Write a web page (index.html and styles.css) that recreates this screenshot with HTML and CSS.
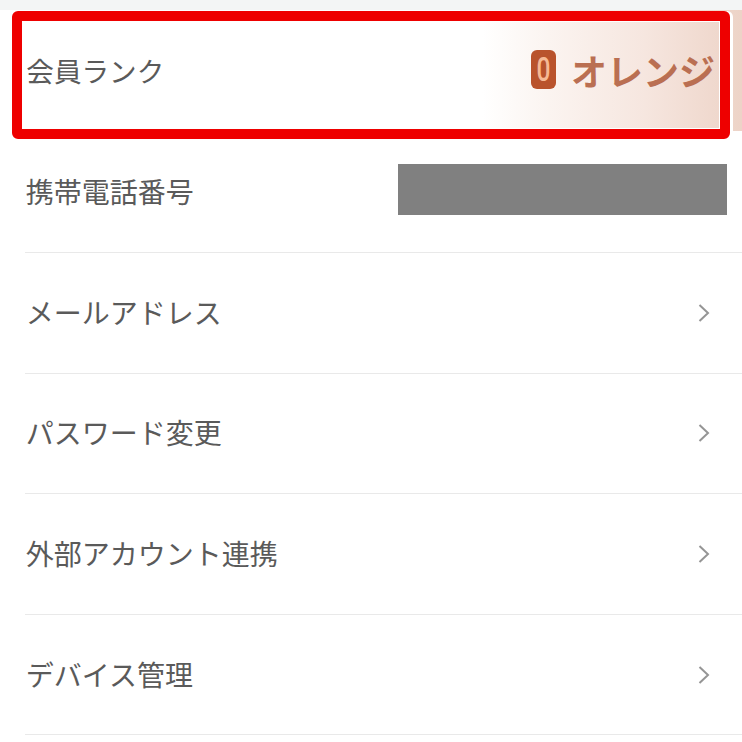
FILE: index.html
```html
<!DOCTYPE html>
<html lang="ja">
<head>
<meta charset="utf-8">
<title>会員情報</title>
<link rel="stylesheet" href="styles.css">
</head>
<body>
<div class="top-strip"></div>
<ul class="list">
  <li class="row rank">
    <span class="label">会員ランク</span>
    <span class="rank-value"><span class="badge"><span class="digit">0</span></span><span class="rank-name">オレンジ</span></span>
  </li>
  <li class="row"><span class="label">携帯電話番号</span><span class="redacted"></span></li>
  <li class="row"><span class="label">メールアドレス</span><svg class="chev" viewBox="0 0 12 20"><path d="M1.5 2 L10 10 L1.5 18"/></svg></li>
  <li class="row"><span class="label">パスワード変更</span><svg class="chev" viewBox="0 0 12 20"><path d="M1.5 2 L10 10 L1.5 18"/></svg></li>
  <li class="row"><span class="label">外部アカウント連携</span><svg class="chev" viewBox="0 0 12 20"><path d="M1.5 2 L10 10 L1.5 18"/></svg></li>
  <li class="row"><span class="label">デバイス管理</span><svg class="chev" viewBox="0 0 12 20"><path d="M1.5 2 L10 10 L1.5 18"/></svg></li>
</ul>
<div class="highlight"></div>
</body>
</html>
```
FILE: styles.css
```css
html, body {
  margin: 0;
  padding: 0;
  background: #fff;
  height: 742px;
  overflow: hidden;
}
body {
  position: relative;
  font-family: "Noto Sans CJK JP", "Noto Sans", sans-serif;
  color: #5a5a5a;
}
.top-strip {
  height: 10px;
  background: #f3f5f5;
}
.list {
  list-style: none;
  margin: 0;
  padding: 0;
}
.row {
  box-sizing: border-box;
  height: 120.6px;
  margin-left: 25px;
  display: flex;
  align-items: center;
  justify-content: space-between;
  border-bottom: 1px solid #e9e9e9;
  padding-right: 32px;
  padding-bottom: 2px;
}
.label {
  font-size: 28px;
  line-height: 40px;
  margin-left: 0.8px;
}
.rank {
  height: 121px;
  margin-left: 0;
  margin-bottom: 1.4px;
  padding-left: 25.5px;
  padding-right: 27px;
  border-bottom: none;
  background: linear-gradient(90deg, #fff 65%, #fbf4f0 74%, #f6e6df 87%, #edd3c7 100%);
}
.rank .label {
  font-size: 27.6px;
}
.rank-value {
  display: flex;
  align-items: center;
  gap: 15px;
}
.badge {
  width: 25px;
  height: 39px;
  border-radius: 6px;
  background: #b9532c;
  color: #f6b994;
  font-family: "Roboto", sans-serif;
  font-weight: 500;
  font-size: 30px;
  line-height: 39px;
  text-align: center;
}
.digit {
  display: inline-block;
  transform: scale(0.82, 1.1);
}
.rank-name {
  font-size: 36px;
  line-height: 44px;
  font-weight: 700;
  color: #ba6f52;
}
.redacted {
  width: 329px;
  height: 51px;
  margin-right: -17px;
  margin-bottom: 3px;
  background: #808080;
}
.chev {
  width: 12px;
  height: 20px;
  margin-top: 2px;
  margin-right: 0;
  fill: none;
  stroke: #959595;
  stroke-width: 2;
}
.highlight {
  position: absolute;
  box-sizing: border-box;
  left: 12px;
  top: 11px;
  width: 718px;
  height: 128px;
  border: 10px solid #ee0000;
  border-radius: 6px;
  box-shadow: inset 0 0 0 1px #fff, 3px 0 0 #fff;
}
```
